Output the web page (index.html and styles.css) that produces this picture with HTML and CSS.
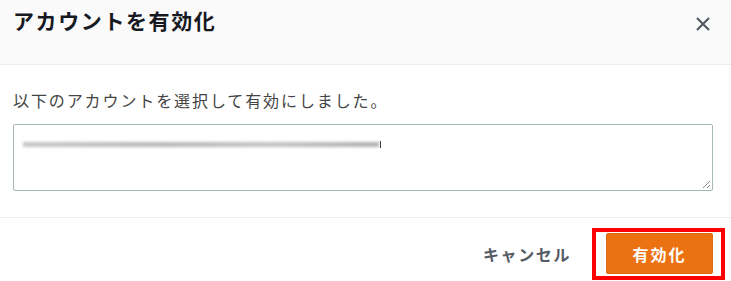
FILE: index.html
```html
<!DOCTYPE html>
<html>
    <head>
        <title>アカウントを有効化</title>
        <link rel="stylesheet" href="styles.css">
    </head>
    <body>
        <div id="modal">
            <div class="modal_header">
                <h2 class="modal_title">アカウントを有効化</h2>
                <button class="close_btn" aria-label="閉じる">
                    <svg width="16" height="16" viewBox="0 0 16 16">
                        <path d="M2 2 L14 14 M14 2 L2 14" stroke="#545b64" stroke-width="2.2" fill="none"/>
                    </svg>
                </button>
            </div>
            <div class="modal_body">
                <p class="message">以下のアカウントを選択して有効にしました。</p>
                <div class="account_box">
                    <div class="account_line">
                        <span class="blur_bar"></span><span class="tail"></span>
                    </div>
                    <svg class="grip" width="9" height="9" viewBox="0 0 9 9">
                        <path d="M1 8 L8 1 M5 8 L8 5" stroke="#888" stroke-width="1" fill="none"/>
                    </svg>
                </div>
            </div>
            <div class="modal_footer">
                <button class="cancel_btn">キャンセル</button>
                <span class="highlight">
                    <button class="primary_btn">有効化</button>
                </span>
            </div>
        </div>
    </body>
</html>
```

FILE: styles.css
```css
body {
    margin: 0px;
    background: #ffffff;
    font-family: "Noto Sans CJK JP", "Noto Sans", sans-serif;
    color: #16191f;
}
#modal {
    width: 731px;
    height: 281px;
    overflow: hidden;
}
.modal_header {
    height: 65px;
    box-sizing: border-box;
    background: #fafafa;
    border-bottom: 1px solid #eaeded;
    display: flex;
    align-items: flex-start;
    justify-content: space-between;
    padding: 5px 20px 0 13px;
}
.modal_title {
    margin: 0;
    font-size: 21px;
    font-weight: bold;
    letter-spacing: 1.6px;
    line-height: 30px;
}
.close_btn {
    border: none;
    background: none;
    padding: 0;
    margin-top: 11px;
    width: 16px;
    height: 16px;
}
.modal_body {
    padding: 25px 18px 26px 13px;
    border-bottom: 1px solid #eaeded;
}
.message {
    margin: 0;
    font-size: 16px;
    letter-spacing: 1.9px;
    line-height: 20px;
    color: #444444;
}
.account_box {
    margin-top: 14px;
    height: 67px;
    box-sizing: border-box;
    border: 1px solid #aab7b8;
    border-radius: 2px;
    position: relative;
    padding: 15px 0 0 9px;
}
.account_line {
    display: flex;
    align-items: center;
    height: 8px;
}
.blur_bar {
    display: inline-block;
    width: 356px;
    height: 5px;
    background: linear-gradient(90deg, #c8c8c8, #b8b8b8 40%, #c4c4c4 70%, #b0b0b0);
    filter: blur(1.8px);
}
.tail {
    display: inline-block;
    width: 1px;
    height: 7px;
    background: #333;
    margin-left: 1px;
}
.grip {
    position: absolute;
    right: 1px;
    bottom: 1px;
}
.modal_footer {
    display: flex;
    justify-content: flex-end;
    align-items: center;
    padding: 10px 6px 0 0;
}
.cancel_btn {
    border: none;
    background: none;
    font-family: inherit;
    font-size: 16px;
    font-weight: bold;
    letter-spacing: 1.6px;
    color: #545b64;
    padding: 0;
    margin-right: 21px;
}
.highlight {
    display: inline-block;
    border: 4px solid #ff0000;
    padding: 1px 8px 2px 10px;
}
.primary_btn {
    display: block;
    width: 107px;
    height: 41px;
    border: 1px solid #dd6b10;
    border-radius: 2px;
    background: #ec7211;
    color: #ffffff;
    font-family: inherit;
    font-size: 16px;
    font-weight: bold;
    letter-spacing: 2px;
}
```
